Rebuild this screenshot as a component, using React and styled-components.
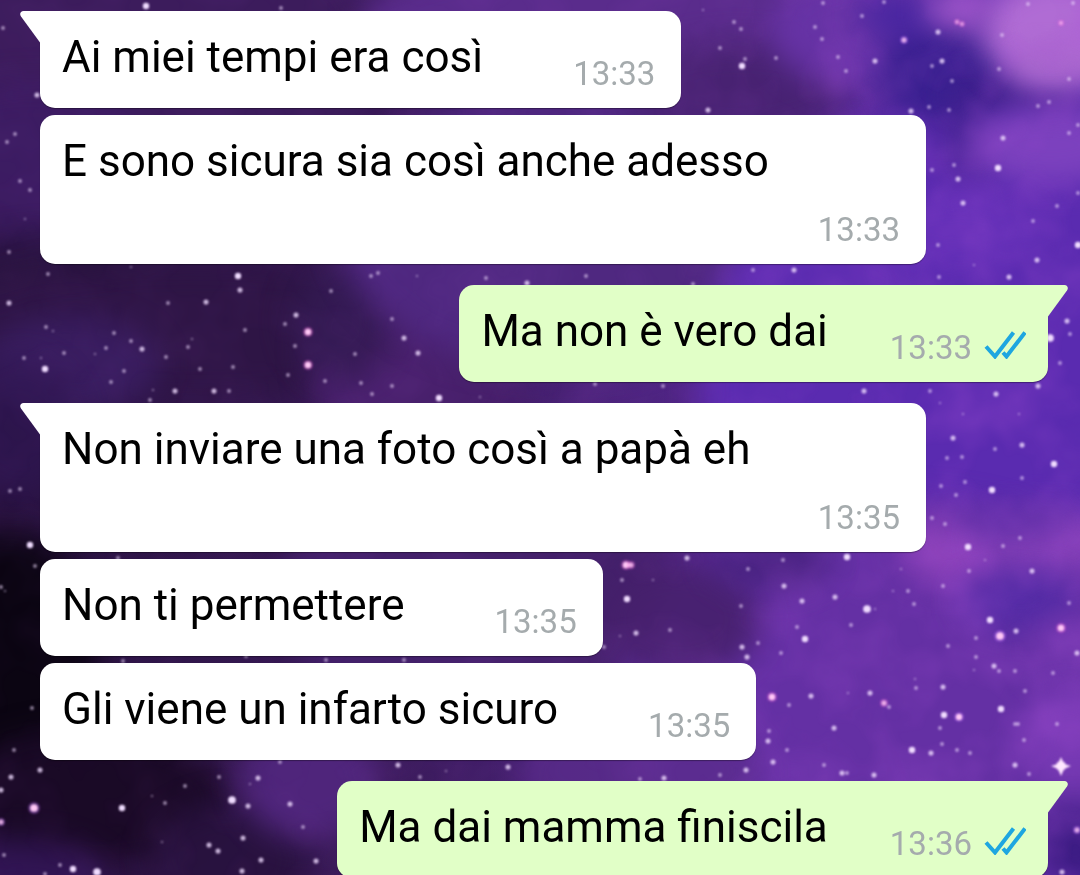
import React from "react";
import styled, { createGlobalStyle } from "styled-components";

const GlobalStyle = createGlobalStyle`
  * { box-sizing: border-box; }
  body { margin: 0; background: #2c1548; font-family: Roboto, "Liberation Sans", sans-serif; }
`;

const clouds = [
  [120, 60, 260, 160, "#3c1c5c", 1],
  [30, 170, 130, 90, "#3d1c64", 0.8],
  [60, 275, 120, 40, "#25123a", 0.8],
  [200, 330, 260, 70, "#2e1545", 1],
  [70, 365, 90, 50, "#3c1f66", 0.8],
  [20, 430, 60, 70, "#2e1650", 0.8],
  [10, 660, 90, 130, "#0b0512", 1],
  [90, 800, 140, 70, "#1a0a26", 1],
  [20, 880, 90, 40, "#34165a", 0.8],
  [230, 860, 80, 60, "#28123e", 0.9],
  [310, 780, 70, 60, "#522780", 0.9],
  [420, 350, 110, 120, "#48206c", 1],
  [340, 320, 50, 60, "#30194e", 0.8],
  [480, 600, 200, 130, "#43206a", 1],
  [560, 230, 220, 140, "#4f2880", 1],
  [620, 20, 260, 70, "#5a2c8c", 1],
  [740, 90, 110, 50, "#472270", 0.9],
  [980, 400, 280, 300, "#5a2bb0", 1],
  [900, 700, 280, 200, "#6430a4", 1],
  [680, 620, 80, 60, "#46206c", 0.9],
  [770, 560, 60, 30, "#43207a", 0.8],
  [640, 770, 120, 60, "#5a2c8c", 0.8],
  [860, 30, 90, 60, "#6a35ac", 0.8],
  [950, 70, 70, 60, "#3a2090", 1],
  [1020, 95, 70, 22, "#40208c", 0.9],
  [900, 15, 40, 20, "#4424a0", 0.9],
  [970, 145, 30, 40, "#4a2594", 0.8],
  [1060, 30, 80, 56, "#b06cd4", 1],
  [1050, 66, 40, 20, "#a866cc", 0.8],
  [960, 10, 34, 22, "#a45ccc", 0.9],
  [1050, 145, 80, 40, "#8044c0", 0.9],
  [960, 230, 80, 40, "#6430b8", 0.9],
  [950, 550, 50, 34, "#9044bc", 0.9],
  [1050, 540, 70, 34, "#8c44bc", 0.9],
  [1010, 520, 60, 18, "#5028a0", 0.7],
  [1020, 600, 60, 30, "#4f2aa4", 0.9],
  [1070, 650, 40, 40, "#7438b0", 0.8],
  [1070, 740, 50, 50, "#7c3cb8", 0.8],
  [1075, 850, 40, 40, "#3d1c84", 1],
];

const stars = [
  [146,6,4],[3,28,2],[281,8,2],[37,95,3],[15,134,2],[7,142,2],[20,181,2],[30,190,2],[9,252,2],[25,219,1],
  [48,274,2],[131,267,1],[238,276,4],[240,290,3],[9,303,3],[168,303,2],[206,302,3],[296,315,3],[308,332,4,"p"],[308,365,4,"p"],
  [378,273,2],[371,276,2],[46,327,2],[53,331,1],[114,333,2],[131,341,2],[142,349,3],[106,348,2],[64,353,2],[45,369,4],
  [24,358,2],[41,358,1],[95,354,1],[124,371,2],[111,382,2],[166,357,2],[188,347,2],[192,339,1],[200,369,2],[233,367,2],
  [175,391,3],[214,391,3],[229,391,2],[153,390,1],[245,330,2],[285,324,2],[295,346,2],[288,375,2],[325,381,2],[361,383,2],
  [404,338,3],[418,353,3],[439,398,4],[392,386,2],[372,394,2],[355,354,2],[392,319,2],[331,291,2],[417,276,1],[150,400,2],
  [703,10,1],[734,22,2],[741,29,2],[720,48,2],[742,66,4],[745,59,2],[776,58,2],[815,27,2],[822,39,2],[862,16,2],
  [838,57,2],[875,61,3],[904,40,3,"v"],[938,32,3],[942,61,3],[932,66,2],[952,81,2],[957,22,2,"p"],[962,24,2,"p"],[1002,35,2],
  [999,69,2],[1028,4,2],[1061,23,2,"p"],[1073,3,2],[1069,79,2],[1038,106,2],[1049,102,2],[911,111,3],[929,107,2],[949,110,2],
  [708,110,3],[846,71,2],[884,2,2],[823,3,2],[1078,125,2],[1003,138,3],[1069,133,2],[998,168,4],[958,179,3],[954,165,2],
  [932,170,2],[963,203,3],[1078,193,2],[1057,206,2],[1033,221,2],[1078,245,4],[1037,260,3],[1009,277,3],[938,245,2],[974,265,1],
  [794,270,3],[753,270,2],[693,284,2],[939,277,2],[527,283,3],[486,278,2],[586,276,2],[595,384,2],[663,386,2],[480,397,1],
  [1067,321,3],[1050,338,5],[1070,334,2],[1060,363,2],[996,394,3],[864,391,3],
  [930,391,2],[1038,386,3],[940,403,1],[953,438,3],[1022,445,3],[1054,464,4],[995,449,2],[947,458,2],[962,457,2],[941,486,2],
  [965,482,2],[992,490,4],[956,495,2],[1022,478,2],[932,518,2],[945,524,2],[968,547,4],[1003,546,2],[1020,538,2],[985,560,1],
  [1032,571,3],[969,571,2],[901,569,1],[1019,414,1],[963,414,1],[626,565,4,"p"],[631,565,3,"p"],[627,599,4],[636,633,3],[620,636,1],
  [687,558,3],[783,560,2],[847,557,4],[748,569,2],[784,586,3],[802,601,3],[835,597,3],[867,609,5],[875,609,1],[805,639,4],
  [797,627,2],[851,625,2],[914,604,2],[908,591,2],[893,591,1],[943,586,2],[990,620,4],[1000,636,5,"v"],[1016,631,3],[1061,628,4,"p"],
  [1069,603,2],[976,638,2],[948,646,2],[994,666,3],[999,671,2],[1015,671,2],[976,657,2],[974,670,1],[1077,653,3],[1053,673,2],
  [742,647,3],[747,657,3],[758,643,2],[781,653,2],[670,630,2],[653,580,1],[622,580,2],[604,647,2],[741,606,2],[772,697,4,"p"],
  [811,696,3],[789,705,2],[870,693,3],[884,703,3,"p"],[889,707,2],[848,693,1],[915,679,1],[916,688,2],[943,687,3],[944,715,4],
  [959,717,4,"v"],[1001,709,4],[1025,691,2],[1018,724,2],[1015,724,2],[1057,724,2],[940,728,2],[834,728,3],[769,731,2],[768,741,3],
  [787,750,2],[773,762,3],[746,770,3],[720,775,2],[824,765,2],[842,773,3],[847,773,2],[874,775,3],[912,750,4],[931,753,3],
  [942,744,2],[957,750,2],[970,753,2],[1015,765,3],[1029,774,2],[1024,740,2],[1077,830,3,"v"],[1062,872,3],[664,778,3],[640,779,2],
  [508,767,3],[398,765,3],[420,777,2],[446,771,1],[404,660,2],
  [32,708,2],[14,750,2],[40,770,3],[11,777,3],[1,790,3],[34,808,5,"v"],[122,808,4],[1,822,3,"v"],[185,786,2],[165,803,2],
  [152,796,1],[232,800,5],[248,806,3],[258,778,3],[219,777,2],[290,804,3],[303,827,2],[243,838,3],[209,845,3],[218,851,3],
  [261,860,3],[242,871,3],[316,861,3],[73,869,4],[97,872,5],[60,865,2],[4,855,2],[45,874,2],[162,842,1],[123,661,2],
  [246,656,2],[326,660,2],[10,491,2],[20,489,2],[30,545,4],[35,566,2],[1,587,2],[5,591,1],[118,558,2],[250,784,1],[280,762,2],
];

const Wallpaper = styled.svg`
  position: fixed;
  inset: 0;
  width: 100%;
  height: 100%;
  z-index: -1;
`;

const starColors = { p: "#ff6ce0", v: "#c070ff" };

function Galaxy() {
  return (
    <Wallpaper viewBox="0 0 1080 875" preserveAspectRatio="xMidYMid slice" aria-hidden="true">
      <defs>
        <linearGradient id="sky">
          <stop offset="0" stopColor="#28123e" />
          <stop offset="0.35" stopColor="#391a58" />
          <stop offset="0.65" stopColor="#512688" />
          <stop offset="1" stopColor="#6a35b8" />
        </linearGradient>
        <filter id="haze" x="-60%" y="-60%" width="220%" height="220%" colorInterpolationFilters="sRGB">
          <feGaussianBlur stdDeviation="15" />
        </filter>
        <filter id="turbulence" x="0" y="0" width="100%" height="100%" colorInterpolationFilters="sRGB">
          <feTurbulence type="fractalNoise" baseFrequency="0.016" numOctaves="3" seed="8" />
          <feColorMatrix values="0 0 0 0 0.66  0 0 0 0 0.32  0 0 0 0 0.84  1.6 0 0 0 -0.6" />
        </filter>
        <filter id="glow" x="-10%" y="-10%" width="120%" height="120%" colorInterpolationFilters="sRGB">
          <feGaussianBlur stdDeviation="0.9" />
        </filter>
        <linearGradient id="fade">
          <stop offset="0" stopColor="#333333" />
          <stop offset="0.6" stopColor="#555555" />
          <stop offset="0.85" stopColor="#ffffff" />
        </linearGradient>
        <mask id="veil">
          <rect width="1080" height="875" fill="url(#fade)" />
        </mask>
      </defs>
      <rect width="1080" height="875" fill="url(#sky)" />
      {clouds.map(([x, y, rx, ry, color, opacity], i) => (
        <ellipse key={i} cx={x} cy={y} rx={rx} ry={ry} fill={color} opacity={opacity} filter="url(#haze)" />
      ))}
      <g mask="url(#veil)">
        <rect width="1080" height="875" filter="url(#turbulence)" opacity="0.35" />
      </g>
      <g filter="url(#glow)">
        {stars.map(([x, y, size, tint], i) => (
          <g key={i}>
            {tint && <circle cx={x} cy={y} r={size + 1} fill={starColors[tint]} opacity="0.35" />}
            <circle
              cx={x}
              cy={y}
              r={size * 0.65 + 0.6}
              fill={tint ? "#ffc8f6" : "#f0dcff"}
              opacity={Math.min(1, 0.2 + size * 0.2)}
            />
          </g>
        ))}
        <path d="M1061 757l3 7 7 2-7 3-3 7-3-7-7-3 7-2z" fill="#ffe6ff" />
        <circle cx="1061" cy="766" r="5" fill="#ffe6ff" />
      </g>
    </Wallpaper>
  );
}

const Chat = styled.main`
  display: flex;
  flex-direction: column;
  min-height: 100vh;
  padding: 11px 32px 0 40px;
  overflow: hidden;
`;

const Group = styled.section`
  display: flex;
  flex-direction: column;
  align-items: ${(p) => (p.$own ? "flex-end" : "flex-start")};
  gap: 7px;
  margin-bottom: 21px;
`;

const Bubble = styled.article`
  position: relative;
  display: flex;
  flex-wrap: wrap;
  column-gap: ${(p) => (p.$own ? 62 : 90)}px;
  max-width: 886px;
  padding: 20px ${(p) => (p.$own ? 22 : 26)}px 15px 22px;
  border-radius: 15px;
  border-top-left-radius: ${(p) => (p.$tail && !p.$own ? 0 : 15)}px;
  border-top-right-radius: ${(p) => (p.$tail && p.$own ? 0 : 15)}px;
  background: ${(p) => (p.$own ? "#e1ffc7" : "#ffffff")};
  box-shadow: 0 1px 1px rgba(0, 0, 0, 0.35);
`;

const Tail = styled.svg`
  position: absolute;
  top: 0;
  ${(p) => (p.$own ? "right: -20px; transform: scaleX(-1);" : "left: -20px;")}
  width: 21px;
  height: 32px;
  fill: ${(p) => (p.$own ? "#e1ffc7" : "#ffffff")};
`;

const Text = styled.p`
  margin: 0;
  color: #000000;
  font-size: 44px;
  line-height: 52px;
`;

const Meta = styled.footer`
  display: flex;
  align-items: center;
  gap: 12px;
  margin-left: auto;
  padding-top: 24px;
`;

const Time = styled.time`
  color: #a5abad;
  font-size: 33px;
  line-height: 38px;
`;

const Ticks = styled.svg`
  width: 42px;
  height: 28px;
  margin-bottom: 6px;
  fill: none;
  stroke: #1ea6e0;
  stroke-width: 4;
`;

function Message({ text, time, own, tail }) {
  return (
    <Bubble $own={own} $tail={tail}>
      {tail && (
        <Tail $own={own} viewBox="0 0 21 32" aria-hidden="true">
          <path d="M21 0H3.5C.5 0-.8 3 1 5.500L20 31.500h1z" />
        </Tail>
      )}
      <Text>{text}</Text>
      <Meta>
        <Time>{time}</Time>
        {own && (
          <Ticks viewBox="0 0 42 28" role="img" aria-label="Letto">
            <path d="M2 15.500L11 25.500L29.500 1.500M19 21.500L22.500 25.500L41 1.500" />
          </Ticks>
        )}
      </Meta>
    </Bubble>
  );
}

const conversation = [
  { messages: [
    { text: "Ai miei tempi era così", time: "13:33" },
    { text: "E sono sicura sia così anche adesso", time: "13:33" },
  ] },
  { own: true, messages: [{ text: "Ma non è vero dai", time: "13:33" }] },
  { messages: [
    { text: "Non inviare una foto così a papà eh", time: "13:35" },
    { text: "Non ti permettere", time: "13:35" },
    { text: "Gli viene un infarto sicuro", time: "13:35" },
  ] },
  { own: true, messages: [{ text: "Ma dai mamma finiscila", time: "13:36" }] },
];

export default function App() {
  return (
    <>
      <GlobalStyle />
      <Galaxy />
      <Chat>
        {conversation.map((group, g) => (
          <Group key={g} $own={group.own}>
            {group.messages.map((message, m) => (
              <Message key={m} {...message} own={group.own} tail={m === 0} />
            ))}
          </Group>
        ))}
      </Chat>
    </>
  );
}
